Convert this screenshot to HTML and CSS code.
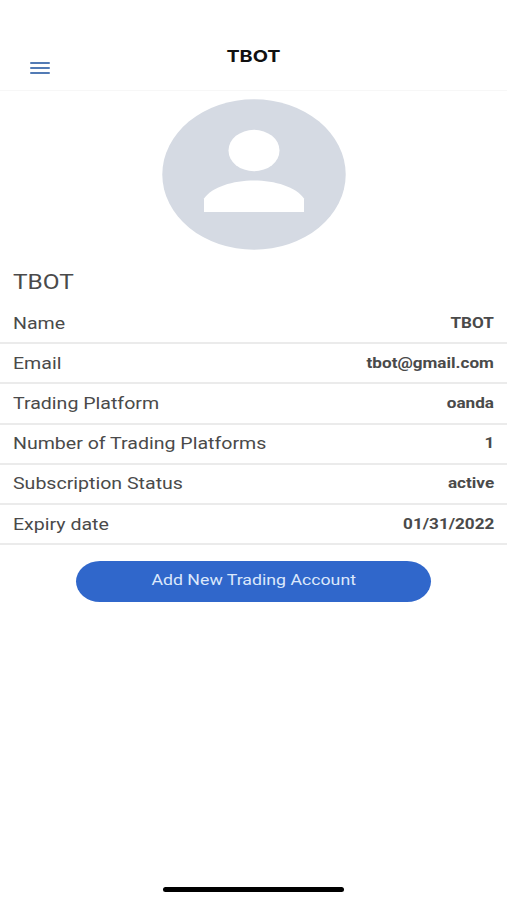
FILE: index.html
```html
<!DOCTYPE html>
<html lang="en">
  <head>
    <meta charset="UTF-8" />
    <meta name="viewport" content="width=device-width, initial-scale=1.0" />
    <title>TBOT</title>
    <link rel="stylesheet" href="styles.css">
  </head>
  <body>
    <header class="header">
      <button class="menu-btn" aria-label="Menu">
        <span></span>
        <span></span>
        <span></span>
      </button>
      <h1 class="title">TBOT</h1>
    </header>

    <main class="profile">
      <svg class="avatar" viewBox="0 0 184 151" aria-hidden="true">
        <ellipse cx="92" cy="75.5" rx="91.7" ry="75.2" fill="#d5dae3" />
        <ellipse cx="92" cy="51.5" rx="25.5" ry="20.7" fill="#fff" />
        <path d="M42 113V99.500C50 88 71 81.500 92 81.500S134 88 142 99.500V113Z" fill="#fff" />
      </svg>

      <h2 class="section-title"><span class="wide">TBOT</span></h2>

      <ul class="details">
        <li><span class="label">Name</span><b class="value">TBOT</b></li>
        <li><span class="label">Email</span><b class="value">tbot@gmail.com</b></li>
        <li><span class="label">Trading Platform</span><b class="value">oanda</b></li>
        <li><span class="label">Number of Trading Platforms</span><b class="value">1</b></li>
        <li><span class="label">Subscription Status</span><b class="value">active</b></li>
        <li><span class="label">Expiry date</span><b class="value">01/31/2022</b></li>
      </ul>

      <button class="add-btn"><span>Add New Trading Account</span></button>
    </main>

    <div class="home-bar"></div>
  </body>
</html>
```
FILE: styles.css
```css
* {
  box-sizing: border-box;
}

body {
  display: flex;
  flex-direction: column;
  height: 100vh;
  margin: 0;
  overflow: hidden;
  background: #fff;
  color: #4a4a4a;
  font-family: Roboto, sans-serif;
}

.header {
  display: grid;
  grid-template-columns: 80px 1fr 80px;
  height: 91px;
  padding-top: 44px;
  border-bottom: 1px solid #f7f7f7;
}

.menu-btn {
  display: flex;
  flex-direction: column;
  gap: 2.5px;
  width: 20px;
  height: 13px;
  margin: 17.5px 0 0 30px;
  padding: 0;
  border: 0;
  background: none;
}

.menu-btn span {
  width: 100%;
  height: 2.5px;
  flex: none;
  border-radius: 1px;
  background: #527bb5;
}

.title {
  margin: 0;
  color: #111;
  font-family: Inter, sans-serif;
  font-size: 16.5px;
  font-weight: 700;
  line-height: 24px;
  text-align: center;
  transform: scaleX(1.2);
}

.profile {
  display: flex;
  flex: 1;
  flex-direction: column;
}

.avatar {
  width: 184px;
  height: 151px;
  margin: 8px auto 0;
}

.section-title {
  margin: 20px 0 0 13px;
  font-size: 20px;
  font-weight: 400;
  line-height: 24px;
}

/* letters are stretched sideways all over the screen */
.wide,
.label {
  display: inline-block;
  transform: scaleX(1.222);
  transform-origin: left;
}

.details {
  margin: 10px 0 0;
  padding: 0;
  list-style: none;
}

.details li {
  display: flex;
  align-items: center;
  justify-content: space-between;
  height: 40.2px;
  padding: 0 13px;
  border-bottom: 2px solid #ebebeb;
}

.label {
  font-size: 16px;
}

.value {
  font-size: 14.5px;
  transform: scaleX(1.18);
  transform-origin: right;
}

.add-btn {
  width: 355px;
  height: 41px;
  margin: 16px auto 0;
  padding: 0 0 3px;
  border: 0;
  border-radius: 24px / 20.5px;
  background: #3067cb;
  color: #dce8fb;
  font-family: inherit;
  font-size: 14.5px;
}

.add-btn span {
  display: inline-block;
  transform: scaleX(1.222);
}

.home-bar {
  width: 181px;
  height: 5px;
  margin: 0 auto 8px;
  border-radius: 3px;
  background: #000;
}
```
